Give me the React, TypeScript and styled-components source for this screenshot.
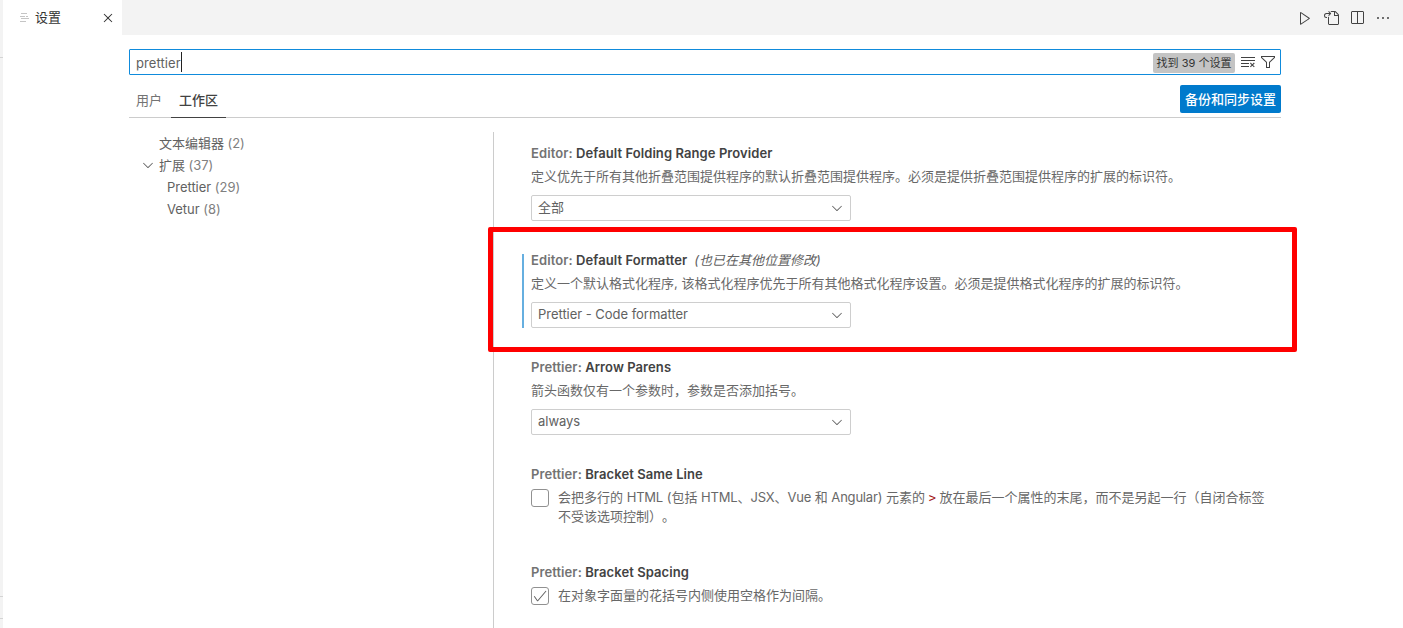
import React from "react";
import styled, { createGlobalStyle } from "styled-components";
import {
  VscCheck,
  VscChevronDown,
  VscClearAll,
  VscClose,
  VscEllipsis,
  VscFilter,
  VscGoToFile,
  VscPlay,
  VscSplitHorizontal,
} from "react-icons/vsc";

const GlobalStyle = createGlobalStyle`
  * { box-sizing: border-box; }
  body {
    margin: 0;
    background: #fff;
    color: #616161;
    font: 13px/18px Inter, "Noto Sans CJK SC", sans-serif;
    text-spacing-trim: space-all;
    overflow: hidden;
  }
  svg { display: block; flex: none; }
`;

const Window = styled.div`
  position: relative;
  display: flex;
  width: 1403px;
  height: 628px;
  overflow: hidden;
`;

const SideEdge = styled.div`
  display: flex;
  flex-direction: column;
  width: 3px;
  background: #f3f3f3;
`;

const EdgeLine = styled.div<{ $before: number }>`
  height: 1px;
  margin-top: ${(p) => p.$before}px;
  background: #d4d4d4;
`;

const Editor = styled.div`
  display: flex;
  flex-direction: column;
  flex: 1;
  min-width: 0;
`;

const TabBar = styled.div`
  display: flex;
  justify-content: space-between;
  height: 35px;
  flex: none;
  background: #f3f3f3;
`;

const Tab = styled.div`
  display: flex;
  align-items: center;
  width: 119px;
  padding: 0 6px 0 17px;
  background: #fff;
  color: #333;
`;

const TabLabel = styled.span`
  flex: 1;
  margin-left: 6px;
  padding-bottom: 2px;
`;

const Actions = styled.div`
  display: flex;
  align-items: center;
  gap: 10px;
  padding-right: 12px;
  color: #424242;
`;

const Settings = styled.div`
  display: flex;
  flex-direction: column;
  flex: 1;
  width: 1152px;
  margin-left: 126px;
  padding-top: 14px;
  min-height: 0;
`;

const SearchBox = styled.div`
  display: flex;
  align-items: center;
  height: 26px;
  flex: none;
  padding: 0 4px 0 6px;
  border: 1px solid #0f8bdc;
  border-radius: 1px;
`;

const Query = styled.span`
  padding-top: 1px;
  letter-spacing: 0.08px;
`;

const Caret = styled.span`
  width: 1px;
  height: 20px;
  margin-right: auto;
  background: #222;
`;

const CountBadge = styled.span`
  display: flex;
  align-items: center;
  justify-content: center;
  width: 82px;
  height: 20px;
  margin: 2px 5px 0 0;
  border-radius: 2px;
  background: #c4c4c4;
  color: #333;
  font-size: 11px;
  line-height: 14px;
  white-space: nowrap;
`;

const FilterIcon = styled.span`
  margin-left: 4px;
  color: #424242;
`;

const ClearIcon = styled.span`
  color: #424242;
`;

const ScopeBar = styled.div`
  display: flex;
  align-items: flex-end;
  height: 43px;
  flex: none;
  border-bottom: 1px solid #ccc;
`;

const Scope = styled.div<{ $active?: boolean }>`
  height: 33px;
  margin-bottom: -1px;
  padding: 6px ${(p) => (p.$active ? 8 : 9)}px 0 ${(p) => (p.$active ? 8 : 7)}px;
  border-bottom: 1px solid ${(p) => (p.$active ? "#424242" : "transparent")};
  color: ${(p) => (p.$active ? "#424242" : "#737373")};
  font-weight: ${(p) => (p.$active ? 500 : 400)};
`;

const SyncButton = styled.button`
  width: 101px;
  height: 28px;
  margin: 0 0 4px auto;
  padding: 0;
  border: 0;
  border-radius: 2px;
  background: #007acc;
  color: #fff;
  font: 500 13px/18px Inter, "Noto Sans CJK SC", sans-serif;
`;

const Body = styled.div`
  display: flex;
  flex: 1;
  min-height: 0;
  padding-top: 14px;
`;

const Toc = styled.nav`
  width: 364px;
  flex: none;
`;

const TocRow = styled.div<{ $indent: number }>`
  display: flex;
  align-items: center;
  height: 22px;
  padding-left: ${(p) => p.$indent}px;
  white-space: pre;
  letter-spacing: -0.03px;
`;

const TocCount = styled.span`
  color: #808080;
`;

const TocChevron = styled.span`
  width: 19px;
`;

const List = styled.main`
  flex: 1;
  min-width: 0;
  padding: 0 0 0 28px;
  border-left: 1px solid #ccc;
`;

const Item = styled.section<{ $height: number; $modified?: boolean }>`
  height: ${(p) => p.$height}px;
  padding: 12px 0 0 9px;
  background: ${(p) =>
    p.$modified
      ? "linear-gradient(#66afe0, #66afe0) 0 15px / 2px 74px no-repeat"
      : "none"};
`;

const Title = styled.h3`
  margin: 0 0 5px;
  color: #424242;
  font-size: 13px;
  line-height: 18px;
  font-weight: 600;
  letter-spacing: 0.08px;
  white-space: pre;
`;

const Category = styled.span`
  color: #737373;
`;

const Elsewhere = styled.em`
  margin-left: 7px;
  color: #616161;
  font-weight: 400;
  letter-spacing: 0;
`;

const Description = styled.p`
  margin: 0;
  color: #686868;
  line-height: 19px;
  white-space: pre;
`;

const Latin = styled.span`
  letter-spacing: -0.2px;
`;

const Code = styled.code`
  color: #a31515;
  font: 12px "DejaVu Sans Mono", monospace;
`;

const Select = styled.div`
  display: flex;
  align-items: center;
  justify-content: space-between;
  width: 320px;
  height: 26px;
  margin-top: 9px;
  padding: 0 5px 1px 6px;
  border: 1px solid #cecece;
  border-radius: 2px;
  color: #616161;
`;

const SelectValue = styled.span`
  padding-bottom: 1px;
  letter-spacing: -0.03px;
`;

const CheckRow = styled.div`
  display: flex;
  gap: 9px;
`;

const Checkbox = styled.span`
  display: flex;
  align-items: center;
  justify-content: center;
  width: 18px;
  height: 18px;
  flex: none;
  margin-top: 1px;
  border: 1px solid #919191;
  border-radius: 3px;
  color: #616161;
`;

const Highlight = styled.div`
  position: absolute;
  left: 488px;
  top: 227px;
  width: 809px;
  height: 125px;
  border: 5px solid #f00;
  border-radius: 2px;
`;

const SettingsGlyph = () => (
  <svg width="9" height="10" viewBox="0 0 9 10" fill="#c5c5c5">
    <path d="M1 0h6v1H1zM0 3h5v1H0zM6 3h2v1H6zM1 5h8v1H1zM0 8h6v1H0z" />
  </svg>
);

type SettingProps = {
  category: string;
  name: string;
  height: number;
  modified?: boolean;
  children: React.ReactNode;
};

const Setting = ({ category, name, height, modified, children }: SettingProps) => (
  <Item $height={height} $modified={modified}>
    <Title>
      <Category>{category}: </Category>
      {name}
      {modified && <Elsewhere>(也已在其他位置修改)</Elsewhere>}
    </Title>
    {children}
  </Item>
);

const Dropdown = ({ value }: { value: string }) => (
  <Select>
    <SelectValue>{value}</SelectValue>
    <VscChevronDown size={16} />
  </Select>
);

export default function App() {
  return (
    <Window>
      <GlobalStyle />
      <SideEdge>
        <EdgeLine $before={57} />
        <EdgeLine $before={538} />
        <EdgeLine $before={21} />
      </SideEdge>
      <Editor>
        <TabBar>
          <Tab>
            <SettingsGlyph />
            <TabLabel>设置</TabLabel>
            <VscClose size={16} />
          </Tab>
          <Actions>
            <VscPlay size={16} />
            <VscGoToFile size={16} />
            <VscSplitHorizontal size={16} />
            <VscEllipsis size={16} />
          </Actions>
        </TabBar>
        <Settings>
          <SearchBox>
            <Query>prettier</Query>
            <Caret />
            <CountBadge>找到 39 个设置</CountBadge>
            <ClearIcon><VscClearAll size={16} /></ClearIcon>
            <FilterIcon><VscFilter size={16} /></FilterIcon>
          </SearchBox>
          <ScopeBar>
            <Scope>用户</Scope>
            <Scope $active>工作区</Scope>
            <SyncButton>备份和同步设置</SyncButton>
          </ScopeBar>
          <Body>
            <Toc>
              <TocRow $indent={30}>文本编辑器<TocCount> (2)</TocCount></TocRow>
              <TocRow $indent={11}>
                <TocChevron><VscChevronDown size={16} /></TocChevron>
                扩展<TocCount> (37)</TocCount>
              </TocRow>
              <TocRow $indent={38}>Prettier<TocCount> (29)</TocCount></TocRow>
              <TocRow $indent={38}>Vetur<TocCount> (8)</TocCount></TocRow>
            </Toc>
            <List>
              <Setting category="Editor" name="Default Folding Range Provider" height={107}>
                <Description>定义优先于所有其他折叠范围提供程序的默认折叠范围提供程序。必须是提供折叠范围提供程序的扩展的标识符。</Description>
                <Dropdown value="全部" />
              </Setting>
              <Setting category="Editor" name="Default Formatter" height={107} modified>
                <Description>定义一个默认格式化程序, 该格式化程序优先于所有其他格式化程序设置。必须是提供格式化程序的扩展的标识符。</Description>
                <Dropdown value="Prettier - Code formatter" />
              </Setting>
              <Setting category="Prettier" name="Arrow Parens" height={107}>
                <Description>箭头函数仅有一个参数时，参数是否添加括号。</Description>
                <Dropdown value="always" />
              </Setting>
              <Setting category="Prettier" name="Bracket Same Line" height={98}>
                <CheckRow>
                  <Checkbox />
                  <Description>
                    会把多行的 <Latin>HTML</Latin> (包括 <Latin>HTML</Latin>、<Latin>JSX</Latin>、<Latin>Vue</Latin> 和 <Latin>Angular</Latin>) 元素的 <Code>&gt;</Code> 放在最后一个属性的末尾，而不是另起一行（自闭合标签
                    <br />
                    不受该选项控制）。
                  </Description>
                </CheckRow>
              </Setting>
              <Setting category="Prettier" name="Bracket Spacing" height={98}>
                <CheckRow>
                  <Checkbox><VscCheck size={16} /></Checkbox>
                  <Description>在对象字面量的花括号内侧使用空格作为间隔。</Description>
                </CheckRow>
              </Setting>
            </List>
          </Body>
        </Settings>
      </Editor>
      <Highlight />
    </Window>
  );
}
